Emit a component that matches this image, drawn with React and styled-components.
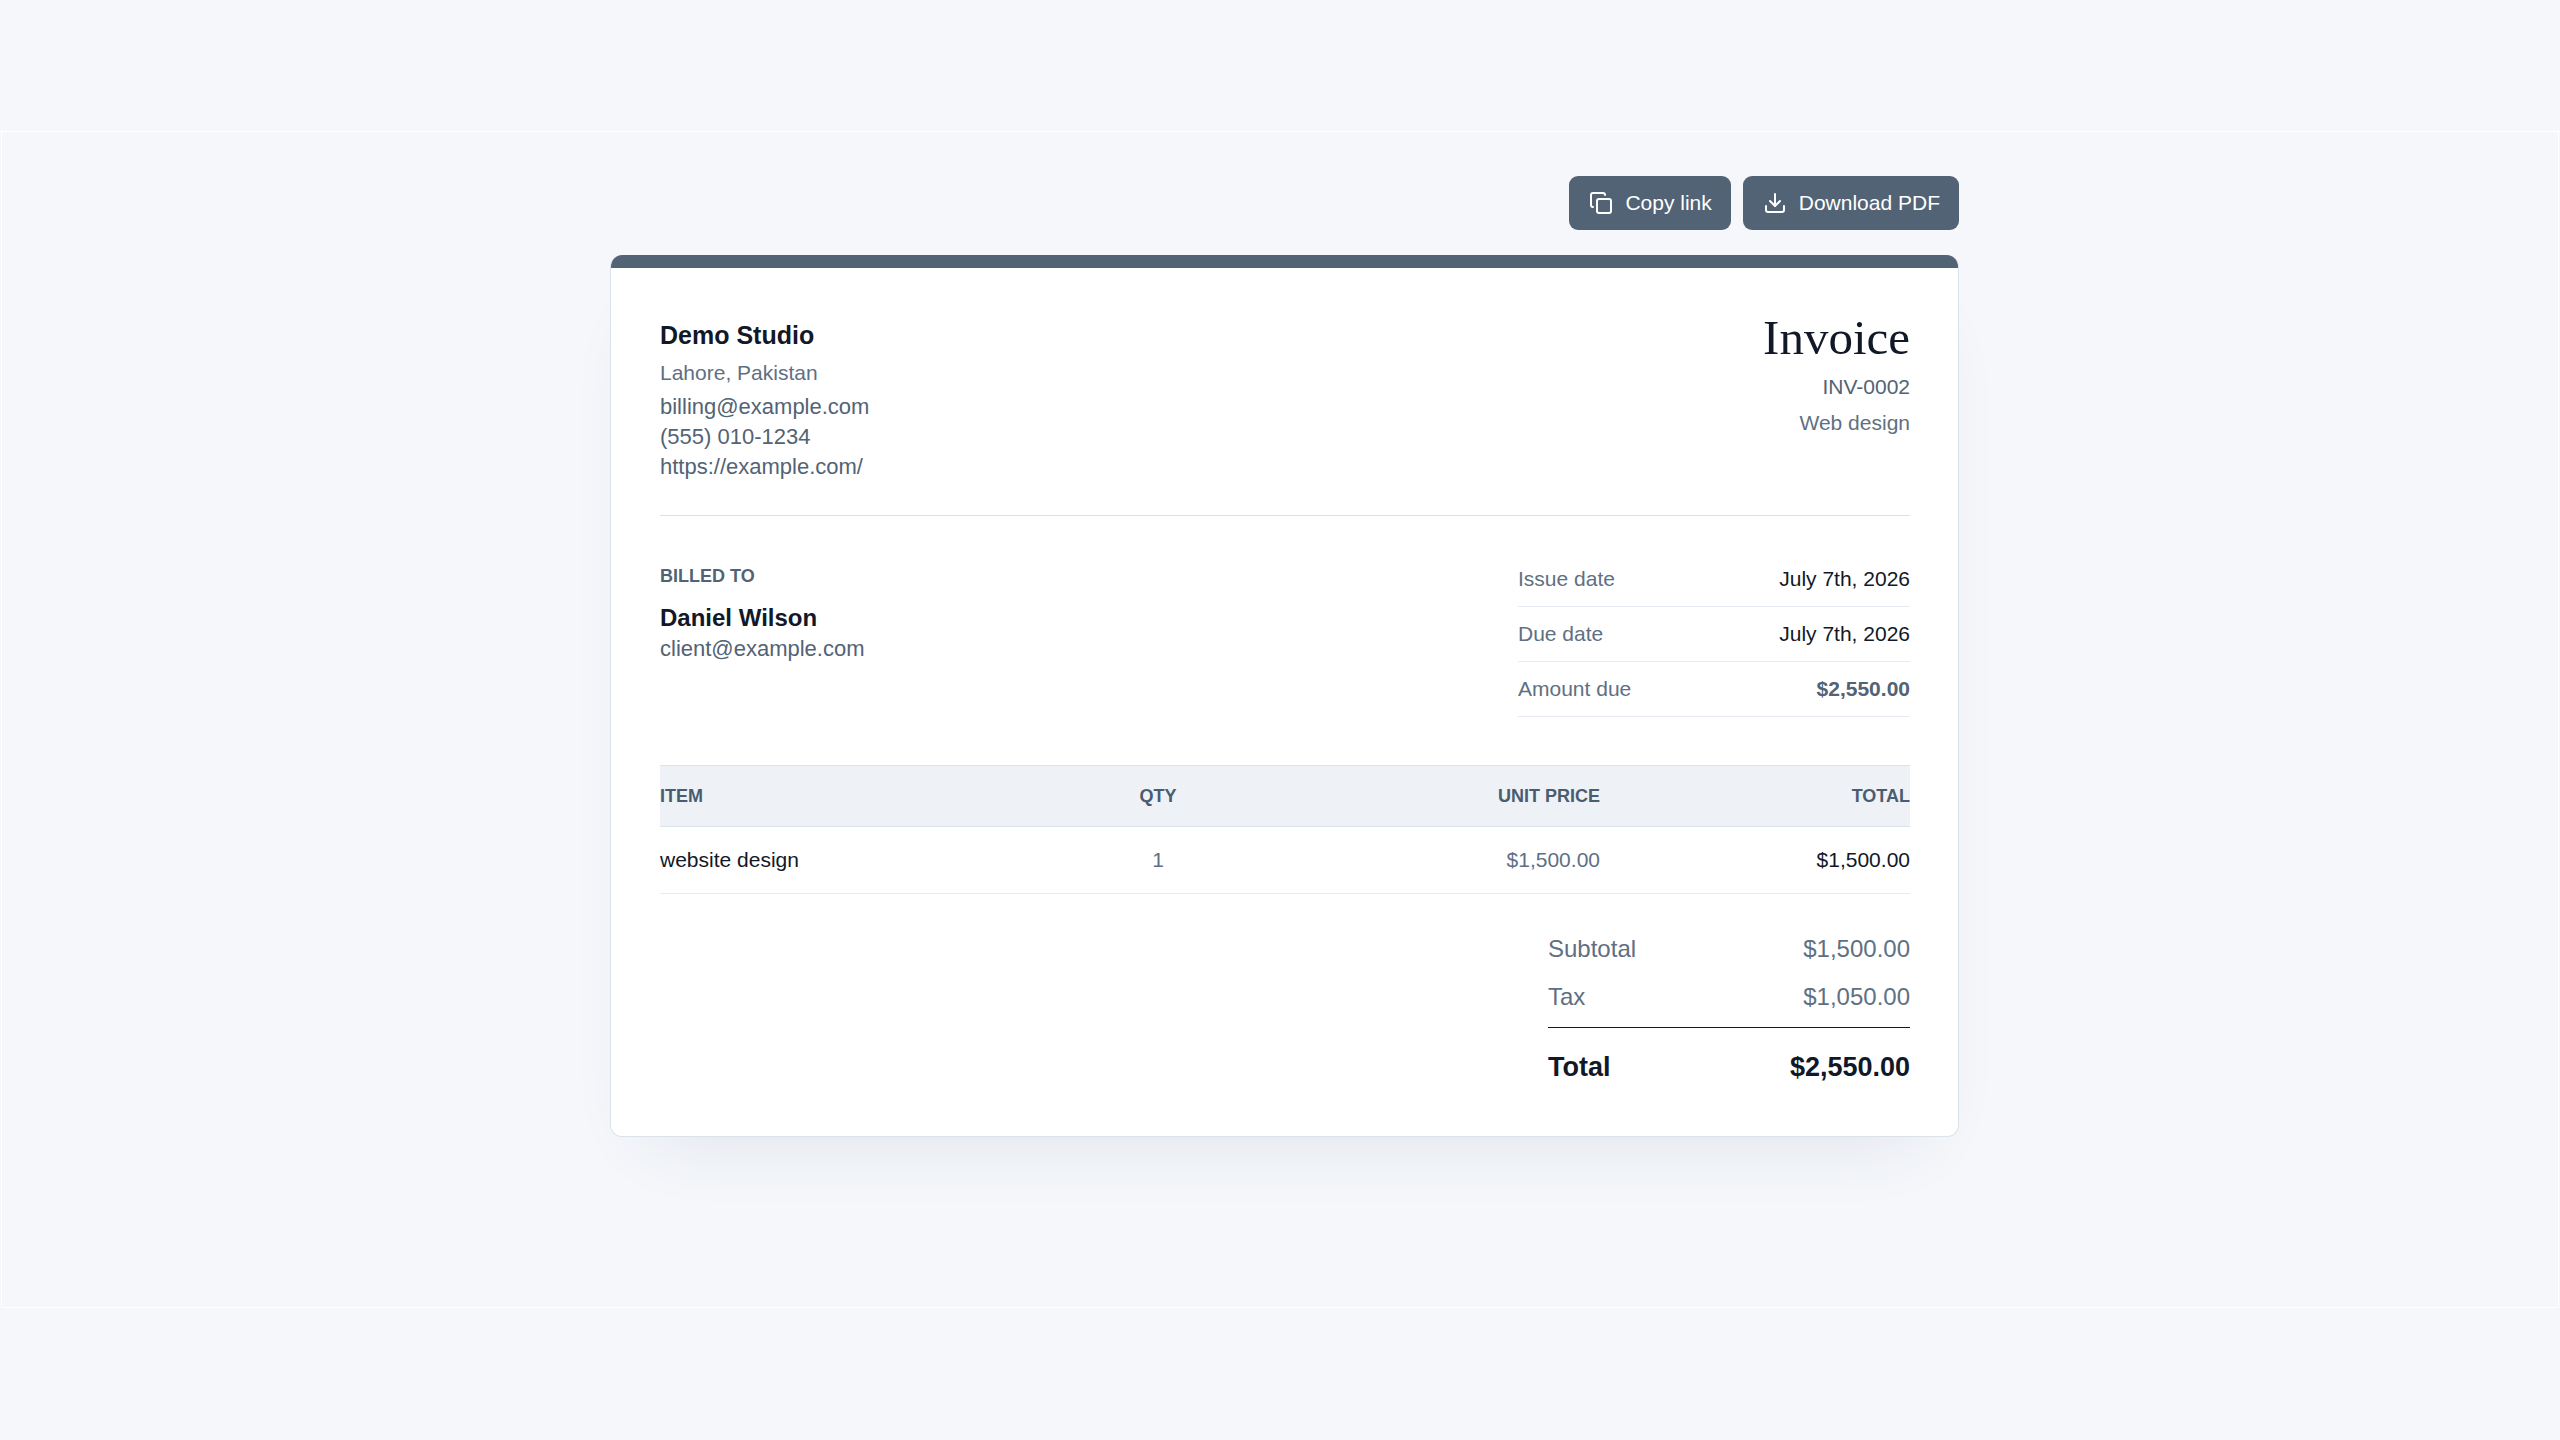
import React from 'react'
import styled, { createGlobalStyle } from 'styled-components'
import { Copy, Download } from 'lucide-react'

const ink = '#111827'
const accent = '#526375'
const muted = '#607082'
const line = '#dbe2ea'
const softLine = '#e6eaf1'

const GlobalStyle = createGlobalStyle`
  * {
    box-sizing: border-box;
  }
  body {
    margin: 0;
    background: #f5f7fb;
    color: ${ink};
    font-family: "Liberation Sans", Arial, sans-serif;
    font-size: 21px;
    line-height: 30px;
  }
  h1, h2, p, dl, dd {
    margin: 0;
  }
`

const Page = styled.div`
  display: flex;
  flex-direction: column;
  min-height: 100vh;
  padding: 131px 1px 132px;
`

const Frame = styled.main`
  flex: 1;
  padding: 44px 0 44px 9px;
  border: 1px solid #fff;
`

const Container = styled.div`
  max-width: 1349px;
  margin: 0 auto;
`

const Toolbar = styled.div`
  display: flex;
  justify-content: flex-end;
  gap: 12px;
  margin-bottom: 25px;
`

const Button = styled.button`
  display: flex;
  align-items: center;
  gap: 12px;
  height: 54px;
  padding: 0 19px 0 20px;
  border: 0;
  border-radius: 9px;
  background: ${accent};
  color: #fff;
  font: inherit;
  cursor: pointer;
`

const Card = styled.article`
  overflow: hidden;
  border: 1px solid ${line};
  border-top: 0;
  border-radius: 12px;
  background: #fff;
  box-shadow: 0 36px 72px -42px rgba(51, 65, 85, 0.14);
`

const AccentBar = styled.div`
  height: 13px;
  background: ${accent};
`

const Body = styled.div`
  padding: 49px 48px 49px 49px;
`

const Split = styled.div`
  display: flex;
  justify-content: space-between;
`

const Header = styled(Split)`
  padding-bottom: 33px;
  margin-bottom: 36px;
  border-bottom: 1px solid ${line};
`

const Company = styled.h2`
  font-size: 25px;
  line-height: 36px;
`

const Address = styled.p`
  margin: 5px 0 4px;
  color: ${muted};
`

const Contact = styled.div`
  display: flex;
  flex-direction: column;
  align-items: flex-start;
  font-size: 22px;
  color: ${accent};

  a {
    color: inherit;
    text-decoration: none;
  }
`

const Heading = styled.div`
  text-align: right;
`

const Title = styled.h1`
  margin-bottom: 13px;
  font-family: Georgia, "Liberation Serif", serif;
  font-size: 49px;
  font-weight: 400;
  line-height: 42px;
`

const InvoiceNumber = styled.p`
  margin-bottom: 6px;
  color: ${accent};
`

const Subject = styled.p`
  color: ${muted};
`

const BilledTo = styled.section`
  padding-top: 12px;
`

const Label = styled.p`
  margin-bottom: 14px;
  color: ${accent};
  font-size: 18px;
  font-weight: 700;
  line-height: 24px;
`

const Client = styled.h2`
  font-size: 24px;
  line-height: 32px;
`

const Dates = styled.dl`
  width: 392px;
`

const DateRow = styled.div`
  display: flex;
  justify-content: space-between;
  padding: 12px 0;
  border-bottom: 1px solid ${softLine};

  dt {
    color: ${muted};
  }
  dd {
    color: ${props => props.$strong ? accent : ink};
    font-weight: ${props => props.$strong ? 700 : 400};
  }
`

const Items = styled.table`
  width: 100%;
  margin-top: 48px;
  border-spacing: 0;
  table-layout: fixed;
`

const Th = styled.th`
  width: ${props => props.$width};
  height: 62px;
  padding: 0;
  border: solid ${line};
  border-width: 1px 0;
  background: #eef1f6;
  color: #4a5c70;
  font-size: 18px;
  text-align: ${props => props.$align || 'left'};
`

const Td = styled.td`
  height: 67px;
  padding: 0;
  border-bottom: 1px solid ${softLine};
  color: ${props => props.$muted ? muted : ink};
  text-align: ${props => props.$align || 'left'};
`

const Totals = styled.dl`
  width: 362px;
  margin: 31px 0 0 auto;
`

const TotalRow = styled.div`
  display: flex;
  justify-content: space-between;
  color: ${muted};
  font-size: 24px;
  line-height: 48px;
`

const GrandTotal = styled(TotalRow)`
  margin-top: 6px;
  padding-top: 19px;
  border-top: 1px solid ${ink};
  color: ${ink};
  font-size: 27px;
  font-weight: 700;
  line-height: 40px;
`

const dates = [
  { label: 'Issue date', value: 'July 7th, 2026' },
  { label: 'Due date', value: 'July 7th, 2026' },
  { label: 'Amount due', value: '$2,550.00', strong: true },
]

const items = [
  { name: 'website design', qty: 1, price: '$1,500.00', total: '$1,500.00' },
]

const InvoiceHeader = () => (
  <Header as="header">
    <div>
      <Company>Demo Studio</Company>
      <Address>Lahore, Pakistan</Address>
      <Contact>
        <a href="mailto:billing@example.com">billing@example.com</a>
        <span>(555) 010-1234</span>
        <a href="https://example.com/">https://example.com/</a>
      </Contact>
    </div>
    <Heading>
      <Title>Invoice</Title>
      <InvoiceNumber>INV-0002</InvoiceNumber>
      <Subject>Web design</Subject>
    </Heading>
  </Header>
)

const InvoiceItems = () => (
  <Items>
    <thead>
      <tr>
        <Th>ITEM</Th>
        <Th $width="264px" $align="center">QTY</Th>
        <Th $width="310px" $align="right">UNIT PRICE</Th>
        <Th $width="310px" $align="right">TOTAL</Th>
      </tr>
    </thead>
    <tbody>
      {items.map(item => (
        <tr key={item.name}>
          <Td>{item.name}</Td>
          <Td $align="center" $muted>{item.qty}</Td>
          <Td $align="right" $muted>{item.price}</Td>
          <Td $align="right">{item.total}</Td>
        </tr>
      ))}
    </tbody>
  </Items>
)

export default function App() {
  return (
    <Page>
      <GlobalStyle />
      <Frame>
        <Container>
          <Toolbar>
            <Button type="button"><Copy size={24} strokeWidth={2} />Copy link</Button>
            <Button type="button"><Download size={24} strokeWidth={2} />Download PDF</Button>
          </Toolbar>
          <Card>
            <AccentBar />
            <Body>
              <InvoiceHeader />
              <Split>
                <BilledTo>
                  <Label>BILLED TO</Label>
                  <Client>Daniel Wilson</Client>
                  <Contact>
                    <a href="mailto:client@example.com">client@example.com</a>
                  </Contact>
                </BilledTo>
                <Dates>
                  {dates.map(({ label, value, strong }) => (
                    <DateRow key={label} $strong={strong}>
                      <dt>{label}</dt>
                      <dd>{value}</dd>
                    </DateRow>
                  ))}
                </Dates>
              </Split>
              <InvoiceItems />
              <Totals>
                <TotalRow><dt>Subtotal</dt><dd>$1,500.00</dd></TotalRow>
                <TotalRow><dt>Tax</dt><dd>$1,050.00</dd></TotalRow>
                <GrandTotal><dt>Total</dt><dd>$2,550.00</dd></GrandTotal>
              </Totals>
            </Body>
          </Card>
        </Container>
      </Frame>
    </Page>
  )
}
